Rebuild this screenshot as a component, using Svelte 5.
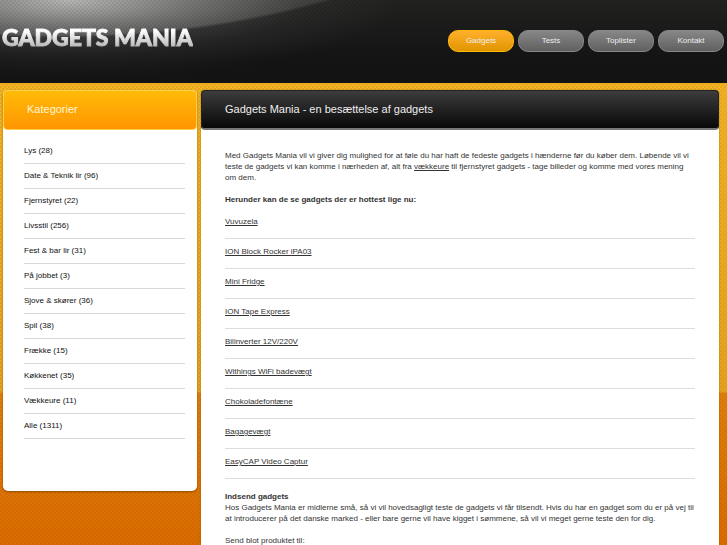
<script lang="ts">
    const menu = [
        { title: 'Gadgets', active: true },
        { title: 'Tests', active: false },
        { title: 'Toplister', active: false },
        { title: 'Kontakt', active: false }
    ];

    const categories = [
        { name: 'Lys', count: 28 },
        { name: 'Date & Teknik lir', count: 96 },
        { name: 'Fjernstyret', count: 22 },
        { name: 'Livsstil', count: 256 },
        { name: 'Fest & bar lir', count: 31 },
        { name: 'På jobbet', count: 3 },
        { name: 'Sjove & skører', count: 36 },
        { name: 'Spil', count: 38 },
        { name: 'Frække', count: 15 },
        { name: 'Køkkenet', count: 35 },
        { name: 'Vækkeure', count: 11 },
        { name: 'Alle', count: 1311 }
    ];

    const gadgets = [
        'Vuvuzela',
        'ION Block Rocker iPA03',
        'Mini Fridge',
        'ION Tape Express',
        'Bilinverter 12V/220V',
        'Withings WiFi badevægt',
        'Chokoladefontæne',
        'Bagagevægt',
        'EasyCAP Video Captur'
    ];
</script>

<div class="page">
    <header>
        <a class="logo" href="#forside">GADGETS MANIA</a>
        <nav>
            {#each menu as item}
                <a href="#{item.title.toLowerCase()}" class:active={item.active}>{item.title}</a>
            {/each}
        </nav>
    </header>

    <div class="columns">
        <aside>
            <h2 class="bar orange">Kategorier</h2>
            <ul class="categories">
                {#each categories as category}
                    <li><a href="#kategori">{category.name} ({category.count})</a></li>
                {/each}
            </ul>
        </aside>

        <main>
            <h1 class="bar dark">Gadgets Mania - en besættelse af gadgets</h1>
            <div class="content">
                <p>
                    Med Gadgets Mania vil vi giver dig mulighed for at føle du har haft de fedeste gadgets i hænderne
                    før du køber dem. Løbende vil vi teste de gadgets vi kan komme i nærheden af, alt fra
                    <a href="#kategori">vækkeure</a> til fjernstyret gadgets - tage billeder og komme med vores mening
                    om dem.
                </p>
                <p><strong>Herunder kan de se gadgets der er hottest lige nu:</strong></p>
                <ul class="gadgets">
                    {#each gadgets as gadget}
                        <li><a href="#gadget">{gadget}</a></li>
                    {/each}
                </ul>
                <h3>Indsend gadgets</h3>
                <p>
                    Hos Gadgets Mania er midlerne små, så vi vil hovedsagligt teste de gadgets vi får tilsendt. Hvis du
                    har en gadget som du er på vej til at introducerer på det danske marked - eller bare gerne vil have
                    kigget i sømmene, så vil vi meget gerne teste den for dig.
                </p>
                <p>Send blot produktet til:</p>
            </div>
        </main>
    </div>
</div>

<style>
    :global(body) {
        overflow-x: hidden;
        scrollbar-width: none;
    }

    .page {
        min-height: 100vh;
        font-family: "Liberation Sans", Arial, sans-serif;
        font-size: 8px;
        line-height: 11px;
        color: #333;
        background:
            repeating-conic-gradient(rgba(120, 60, 0, 0.1) 0 25%, transparent 0 50%) 0 0 / 4px 4px,
            linear-gradient(#f2b424 83px, #e8a41e 392px, #e07f0c 393px, #dc6c00 545px);
    }

    header {
        display: flex;
        justify-content: space-between;
        align-items: flex-start;
        box-sizing: border-box;
        height: 83px;
        padding: 21px 3px 0 2px;
        background:
            repeating-conic-gradient(rgba(0, 0, 0, 0.07) 0 25%, transparent 0 50%) 0 0 / 4px 4px,
            radial-gradient(ellipse 560px 298px at 60px -260px, transparent 99%, rgba(20, 20, 20, 0.5) 100%),
            radial-gradient(
                ellipse 330px 78px at 70px 0,
                rgba(255, 255, 255, 0.65),
                rgba(255, 255, 255, 0.36) 35%,
                rgba(255, 255, 255, 0.1) 70%,
                transparent
            ),
            linear-gradient(#30302e, #141414 60px);
    }

    .logo {
        font-family: Lato, sans-serif;
        font-weight: 900;
        font-size: 23px;
        line-height: 32px;
        text-decoration: none;
        color: transparent;
        background: linear-gradient(#fff 10px, #bbb 25px);
        background-clip: text;
        -webkit-text-stroke: 1px transparent;
    }

    nav {
        display: flex;
        gap: 4px;
        padding-top: 9px;
    }

    nav a {
        box-sizing: border-box;
        width: 66px;
        height: 22px;
        border: 1px solid #888;
        border-radius: 10px;
        background: linear-gradient(#878787, #606060);
        color: #eee;
        line-height: 20px;
        text-align: center;
        text-decoration: none;
    }

    nav a.active {
        border-color: #ffb90a;
        background: linear-gradient(#ffb02c, #e09500);
    }

    .columns {
        display: flex;
        align-items: flex-start;
        gap: 4px;
        padding: 7px 8px 0 3px;
    }

    aside {
        flex: 0 0 194px;
        padding-bottom: 52px;
        border-radius: 5px;
        background: #fff;
        box-shadow: 0 1px 2px rgba(90, 50, 0, 0.6);
    }

    main {
        flex: 1;
        min-width: 0;
        border-radius: 5px;
        background: #fff;
        box-shadow: 0 0 2px rgba(90, 50, 0, 0.4);
    }

    .bar {
        box-sizing: border-box;
        height: 40px;
        margin: 0;
        padding: 0 23px;
        border-radius: 4px;
        font-size: 11px;
        font-weight: normal;
        line-height: 36px;
        color: #eee;
    }

    .orange {
        border: 1px solid #ffcf4c;
        background: linear-gradient(#ffbb08, #ff9500);
        color: #fff4d8;
    }

    .dark {
        border: 1px solid #222;
        border-bottom: 2px solid #777;
        background: linear-gradient(#3c3c3c, #080808);
    }

    ul {
        margin: 0;
        padding: 0;
        list-style: none;
    }

    .categories {
        padding: 9px 12px 0 21px;
    }

    .categories li {
        height: 24px;
        border-bottom: 1px solid #d8d8d8;
        line-height: 24px;
    }

    .categories a {
        color: #111;
        text-decoration: none;
    }

    .content {
        padding: 20px 24px 12px;
    }

    p {
        margin: 0 0 11px;
    }

    .content a {
        color: #333;
    }

    .gadgets li {
        height: 22px;
        margin-bottom: 7px;
        border-bottom: 1px solid #ddd;
    }

    h3 {
        margin: 12px 0 0;
        font-size: 8px;
    }
</style>
